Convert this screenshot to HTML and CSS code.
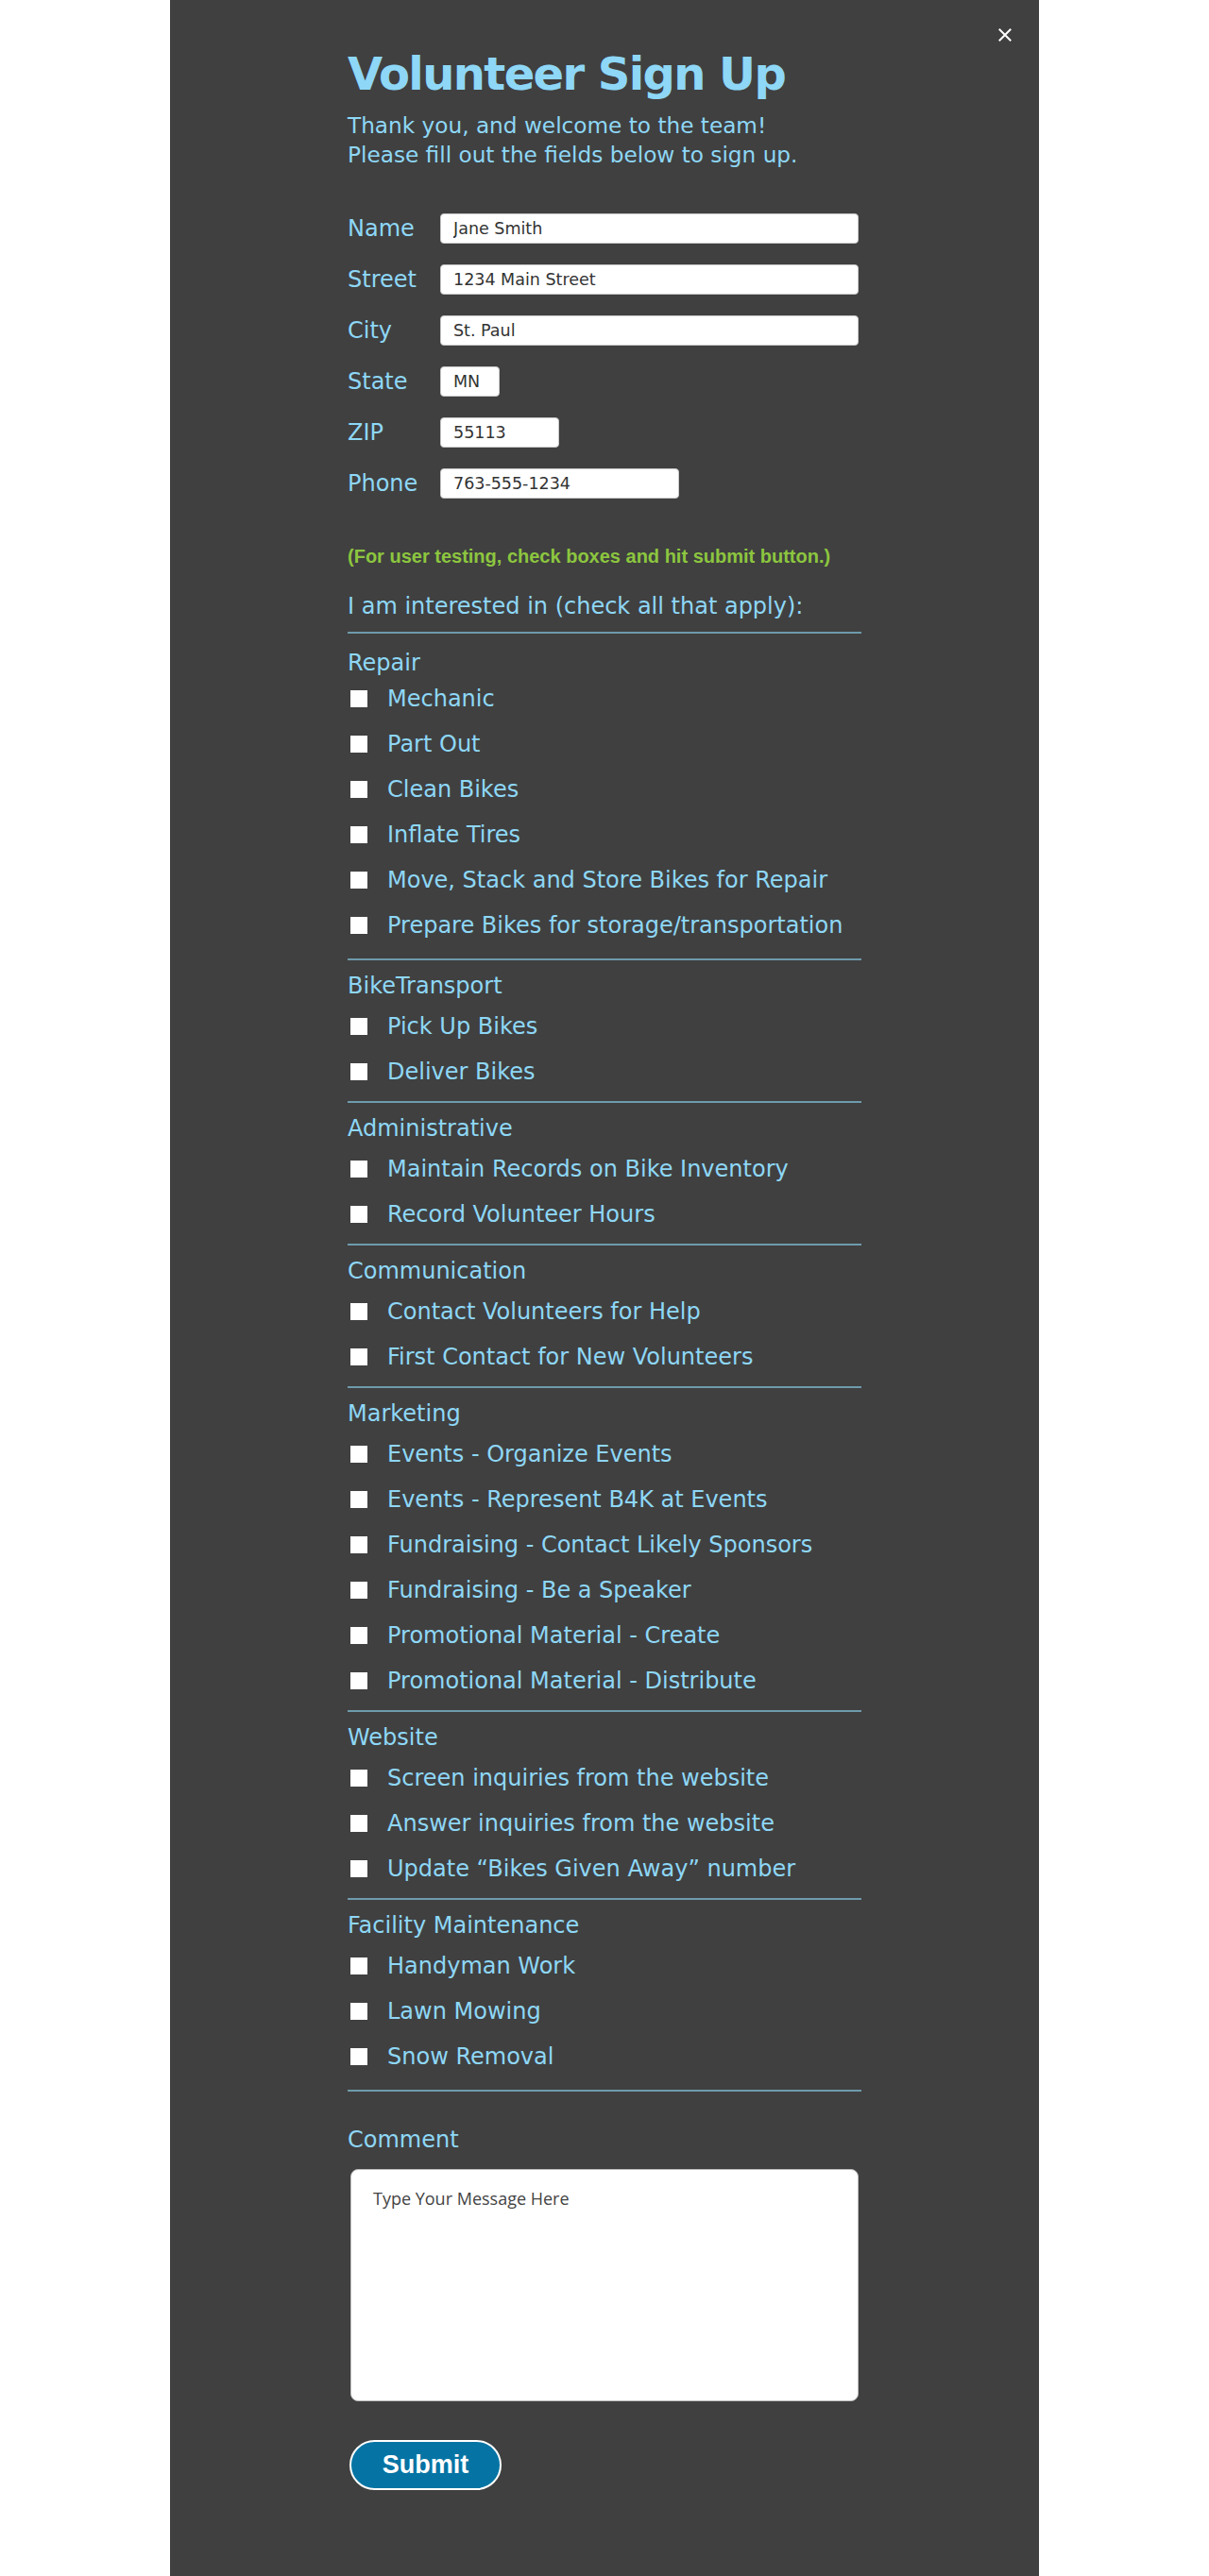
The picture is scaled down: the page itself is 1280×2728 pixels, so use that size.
FILE: index.html
```html
<!DOCTYPE html>
<html lang="en">
<head>
<meta charset="utf-8">
<title>Volunteer Sign Up</title>
<link rel="stylesheet" href="styles.css">
</head>
<body>
<div class="panel">
  <button class="close" type="button" aria-label="Close">
    <svg width="14" height="14" viewBox="0 0 14 14"><path d="M1.5 1.5 L12.5 12.5 M12.5 1.5 L1.5 12.5" stroke="#ffffff" stroke-width="2" fill="none" stroke-linecap="square"/></svg>
  </button>
  <div class="content">
    <h1 class="title">Volunteer Sign Up</h1>
    <p class="intro">Thank you, and welcome to the team!<br>Please fill out the fields below to sign up.</p>
    <form class="form">
      <div class="fields">
        <div class="field"><label class="field-label">Name</label><input class="input input-full" type="text" value="Jane Smith"></div>
        <div class="field"><label class="field-label">Street</label><input class="input input-full" type="text" value="1234 Main Street"></div>
        <div class="field"><label class="field-label">City</label><input class="input input-full" type="text" value="St. Paul"></div>
        <div class="field"><label class="field-label">State</label><input class="input input-state" type="text" value="MN"></div>
        <div class="field"><label class="field-label">ZIP</label><input class="input input-zip" type="text" value="55113"></div>
        <div class="field"><label class="field-label">Phone</label><input class="input input-phone" type="text" value="763-555-1234"></div>
      </div>
      <p class="note">(For user testing, check boxes and hit submit button.)</p>
      <div class="interest">I am interested in (check all that apply):</div>

      <section class="group group-first">
        <h2 class="group-title">Repair</h2>
        <label class="option"><input class="check" type="checkbox"><span>Mechanic</span></label>
        <label class="option"><input class="check" type="checkbox"><span>Part Out</span></label>
        <label class="option"><input class="check" type="checkbox"><span>Clean Bikes</span></label>
        <label class="option"><input class="check" type="checkbox"><span>Inflate Tires</span></label>
        <label class="option"><input class="check" type="checkbox"><span>Move, Stack and Store Bikes for Repair</span></label>
        <label class="option"><input class="check" type="checkbox"><span>Prepare Bikes for storage/transportation</span></label>
      </section>

      <section class="group">
        <h2 class="group-title">BikeTransport</h2>
        <label class="option"><input class="check" type="checkbox"><span>Pick Up Bikes</span></label>
        <label class="option"><input class="check" type="checkbox"><span>Deliver Bikes</span></label>
      </section>

      <section class="group">
        <h2 class="group-title">Administrative</h2>
        <label class="option"><input class="check" type="checkbox"><span>Maintain Records on Bike Inventory</span></label>
        <label class="option"><input class="check" type="checkbox"><span>Record Volunteer Hours</span></label>
      </section>

      <section class="group">
        <h2 class="group-title">Communication</h2>
        <label class="option"><input class="check" type="checkbox"><span>Contact Volunteers for Help</span></label>
        <label class="option"><input class="check" type="checkbox"><span>First Contact for New Volunteers</span></label>
      </section>

      <section class="group">
        <h2 class="group-title">Marketing</h2>
        <label class="option"><input class="check" type="checkbox"><span>Events - Organize Events</span></label>
        <label class="option"><input class="check" type="checkbox"><span>Events - Represent B4K at Events</span></label>
        <label class="option"><input class="check" type="checkbox"><span>Fundraising - Contact Likely Sponsors</span></label>
        <label class="option"><input class="check" type="checkbox"><span>Fundraising - Be a Speaker</span></label>
        <label class="option"><input class="check" type="checkbox"><span>Promotional Material - Create</span></label>
        <label class="option"><input class="check" type="checkbox"><span>Promotional Material - Distribute</span></label>
      </section>

      <section class="group">
        <h2 class="group-title">Website</h2>
        <label class="option"><input class="check" type="checkbox"><span>Screen inquiries from the website</span></label>
        <label class="option"><input class="check" type="checkbox"><span>Answer inquiries from the website</span></label>
        <label class="option"><input class="check" type="checkbox"><span>Update “Bikes Given Away” number</span></label>
      </section>

      <section class="group group-last">
        <h2 class="group-title">Facility Maintenance</h2>
        <label class="option"><input class="check" type="checkbox"><span>Handyman Work</span></label>
        <label class="option"><input class="check" type="checkbox"><span>Lawn Mowing</span></label>
        <label class="option"><input class="check" type="checkbox"><span>Snow Removal</span></label>
      </section>

      <div class="comment-label">Comment</div>
      <textarea class="comment" placeholder="Type Your Message Here"></textarea>
      <button class="submit" type="button">Submit</button>
    </form>
  </div>
</div>
</body>
</html>
```

FILE: styles.css
```css
* { box-sizing: border-box; }

html, body {
  margin: 0;
  padding: 0;
  background: #ffffff;
}

body {
  font-family: "DejaVu Sans", "Noto Sans", sans-serif;
  color: #8ed7f6;
}

.panel {
  position: relative;
  width: 920px;
  height: 2728px;
  margin: 0 auto;
  padding-top: 50px;
  background: #404040;
  overflow: hidden;
}

.close {
  position: absolute;
  top: 30px;
  right: 29px;
  width: 14px;
  height: 14px;
  padding: 0;
  border: 0;
  background: transparent;
  display: block;
}

.close svg { display: block; }

.content {
  width: 544px;
  margin: 0 auto;
}

.title {
  margin: 0;
  font-family: "DejaVu Sans", sans-serif;
  font-weight: bold;
  font-size: 48px;
  line-height: 56px;
  letter-spacing: -1.6px;
  color: #8ed7f6;
}

.intro {
  margin: 11px 0 0;
  font-size: 23.2px;
  line-height: 31px;
  font-weight: 400;
}

.form { margin: 0; }

.fields {
  display: flex;
  flex-direction: column;
  gap: 22px;
  margin-top: 47px;
}

.field {
  display: flex;
  align-items: center;
  height: 32px;
}

.field-label {
  width: 98px;
  flex: none;
  font-size: 24px;
  line-height: 32px;
}

.input {
  height: 32px;
  padding: 0 0 0 13px;
  border: 1px solid #c9c9c9;
  border-radius: 4px;
  background: #ffffff;
  font-family: "DejaVu Sans", sans-serif;
  font-size: 17.5px;
  color: #333333;
  outline: none;
}

.input-full { width: 443px; }
.input-state { width: 63px; }
.input-zip { width: 126px; }
.input-phone { width: 253px; }

.note {
  margin: 49px 0 0;
  font-family: "Liberation Sans", Arial, sans-serif;
  font-weight: bold;
  font-size: 20px;
  line-height: 24px;
  color: #8cc63f;
}

.interest {
  margin-top: 26px;
  padding-bottom: 12px;
  border-bottom: 2px solid #6e9bac;
  font-size: 24px;
  line-height: 30px;
  font-weight: 400;
}

.group {
  padding: 13px 0 7px;
  border-bottom: 2px solid #6e9bac;
}

.group-first {
  padding-top: 17px;
  padding-bottom: 11px;
}

.group-last {
  padding-bottom: 11px;
}

.group-title {
  margin: 0 0 5px;
  font-size: 24px;
  line-height: 28px;
  font-weight: 400;
}

.group-first .group-title { margin-bottom: 0; }

.option {
  display: flex;
  align-items: center;
  gap: 21px;
  height: 48px;
  padding-left: 3px;
  font-size: 24px;
  line-height: 48px;
  white-space: nowrap;
}

.check {
  -webkit-appearance: none;
  appearance: none;
  flex: none;
  width: 18px;
  height: 18px;
  margin: 0;
  border: 0;
  border-radius: 0;
  background: #ffffff;
}

.comment-label {
  margin-top: 37px;
  font-size: 24px;
  line-height: 28px;
  font-weight: 400;
}

.comment {
  display: block;
  width: 538px;
  height: 246px;
  margin: 17px 0 0 3px;
  padding: 18px 23px;
  border: 1px solid #bdbdbd;
  border-radius: 8px;
  background: #ffffff;
  font-family: "Open Sans", sans-serif;
  font-size: 18px;
  line-height: 24px;
  color: #333333;
  resize: none;
  outline: none;
}

.comment::placeholder {
  color: #444444;
  opacity: 1;
}

.submit {
  display: block;
  width: 161px;
  height: 53px;
  margin: 41px 0 0 2px;
  padding: 0;
  border: 2px solid #ffffff;
  border-radius: 27px;
  background: #0574a4;
  font-family: "Liberation Sans", Arial, sans-serif;
  font-weight: bold;
  font-size: 27px;
  color: #ffffff;
}
```
